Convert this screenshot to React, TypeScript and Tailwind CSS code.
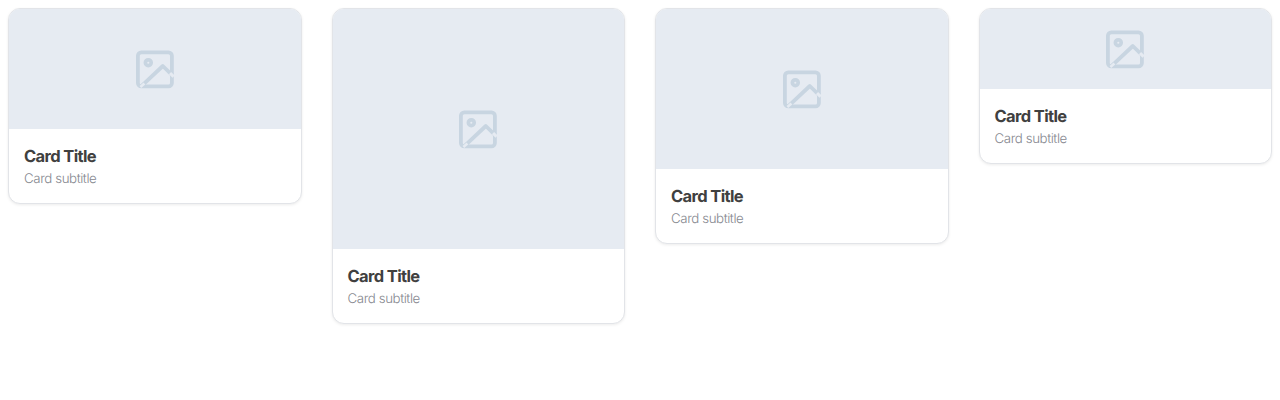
import React from "react";

function PlaceholderIcon() {
  return (
    <svg width="40" height="40" viewBox="0 0 40 40" fill="none" strokeWidth="3.8">
      <rect x="2.9" y="3.4" width="34" height="34" rx="3.4" stroke="#c8d5e1" />
      <circle cx="13.3" cy="13.7" r="2.9" stroke="#c8d5e1" strokeWidth="3.7" />
      <path d="M6.4 37.2 27.8 17 37.2 26.2" stroke="#c8d5e1" strokeLinejoin="round" />
      <path d="M5.4 38 9.4 34.6" stroke="#e6ebf2" strokeWidth="2.6" />
      <path d="M35 24.2 38.6 27.6" stroke="#e6ebf2" strokeWidth="3.2" />
    </svg>
  );
}

function Card({ imageClass }: { imageClass: string }) {
  return (
    <article className="overflow-hidden rounded-xl border border-[#e2e4e8] bg-white shadow-[0_1px_3px_rgba(0,0,0,0.08)]">
      <div className={`flex items-center justify-center bg-[#e6ebf2] ${imageClass}`}>
        <PlaceholderIcon />
      </div>
      <div className="h-[74px] px-[15px] pt-[15px] [text-rendering:geometricPrecision]">
        <h3 className="mb-px text-[16.5px] leading-6 font-bold tracking-[-0.62px] text-[#404040]">Card Title</h3>
        <p className="text-[13.3px] leading-5 font-light tracking-[-0.42px] text-[#86888f]">Card subtitle</p>
      </div>
    </article>
  );
}

export default function App() {
  return (
    <main className="grid h-[400px] grid-cols-4 items-start gap-[30px] bg-white p-2 font-['Inter',sans-serif]">
      <Card imageClass="h-[120px]" />
      <Card imageClass="h-[240px]" />
      <Card imageClass="h-[160px]" />
      <Card imageClass="h-[80px]" />
    </main>
  );
}
